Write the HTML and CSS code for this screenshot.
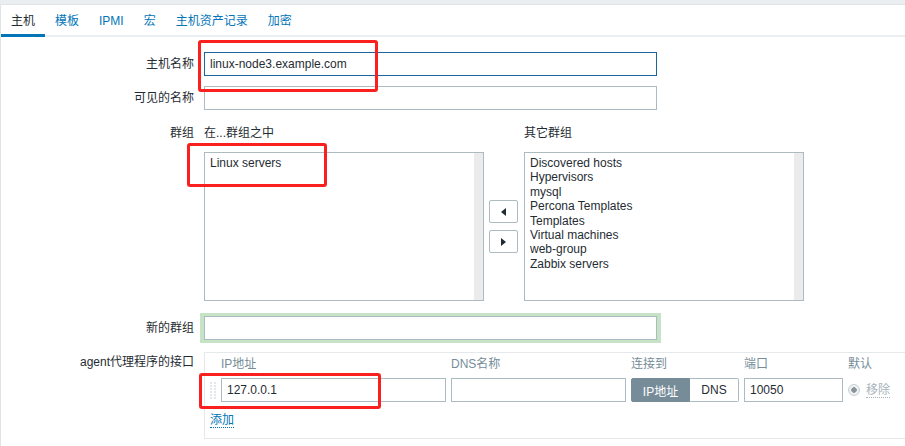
FILE: index.html
```html
<!DOCTYPE html>
<html lang="zh-CN">
<head>
    <meta charset="UTF-8">
    <meta name="viewport" content="width=device-width, initial-scale=1.0">
    <title>主机</title>
    <link rel="stylesheet" href="styles.css">
</head>
<body>
    <div class="topbar"></div>

    <div class="panel">
        <ul class="tabs">
            <li class="tab active">主机</li>
            <li class="tab">模板</li>
            <li class="tab">IPMI</li>
            <li class="tab">宏</li>
            <li class="tab">主机资产记录</li>
            <li class="tab">加密</li>
        </ul>

        <div class="form">
            <div class="form-row row-host">
                <label class="form-label">主机名称</label>
                <div class="form-field">
                    <input class="text-input wide focused" type="text" value="linux-node3.example.com">
                </div>
            </div>

            <div class="form-row row-visible">
                <label class="form-label">可见的名称</label>
                <div class="form-field">
                    <input class="text-input wide" type="text" value="">
                </div>
            </div>

            <div class="form-row row-groups">
                <label class="form-label top">群组</label>
                <div class="form-field">
                    <div class="twinbox">
                        <div class="twinbox-title">在...群组之中</div>
                        <div></div>
                        <div class="twinbox-title">其它群组</div>

                        <div class="listbox">
                            <div class="list-item">Linux servers</div>
                        </div>
                        <div class="move-buttons">
                            <button class="move-btn" type="button"><span class="arrow-left"></span></button>
                            <button class="move-btn" type="button"><span class="arrow-right"></span></button>
                        </div>
                        <div class="listbox">
                            <div class="list-item">Discovered hosts</div>
                            <div class="list-item">Hypervisors</div>
                            <div class="list-item">mysql</div>
                            <div class="list-item">Percona Templates</div>
                            <div class="list-item">Templates</div>
                            <div class="list-item">Virtual machines</div>
                            <div class="list-item">web-group</div>
                            <div class="list-item">Zabbix servers</div>
                        </div>
                    </div>
                </div>
            </div>

            <div class="form-row row-newgroup">
                <label class="form-label">新的群组</label>
                <div class="form-field">
                    <input class="text-input wide highlighted" type="text" value="">
                </div>
            </div>

            <div class="form-row row-agent">
                <label class="form-label top agent-label">agent代理程序的接口</label>
                <div class="form-field">
                    <div class="interfaces">
                        <div class="iface-grid">
                            <div></div>
                            <div class="iface-head">IP地址</div>
                            <div class="iface-head">DNS名称</div>
                            <div class="iface-head">连接到</div>
                            <div class="iface-head">端口</div>
                            <div class="iface-head">默认</div>

                            <div class="drag-handle"></div>
                            <input class="text-input" type="text" value="127.0.0.1">
                            <input class="text-input" type="text" value="">
                            <div class="toggle">
                                <span class="toggle-opt selected">IP地址</span>
                                <span class="toggle-opt">DNS</span>
                            </div>
                            <input class="text-input" type="text" value="10050">
                            <div class="default-cell">
                                <span class="radio"></span>
                                <span class="link-disabled">移除</span>
                            </div>
                        </div>
                        <div class="add-row">
                            <span class="link">添加</span>
                        </div>
                    </div>
                </div>
            </div>
        </div>
    </div>

    <!-- пометки поверх скриншота -->
    <div class="mark mark-host"></div>
    <div class="mark mark-group"></div>
    <div class="mark mark-ip"></div>
</body>
</html>
```

FILE: styles.css
```css
html, body {
    margin: 0;
    padding: 0;
    background-color: #fff;
    overflow: hidden;
}

body {
    position: relative;
    font-family: "Liberation Sans", Arial, "Noto Sans CJK SC", sans-serif;
    font-size: 12px;
    color: #1f2c33;
    min-height: 446px;
}

.topbar {
    height: 4px;
    background-color: #ebeef0;
    border-bottom: 1px solid #dfe4e7;
}

.panel {
    border-left: 1px solid #dfe4e7;
    min-height: 441px;
}

.tabs {
    display: flex;
    margin: 0;
    padding: 0;
    list-style: none;
    border-bottom: 2px solid #ebeef0;
}

.tab {
    padding: 9px 10px 6px;
    line-height: 14px;
    color: #0275b8;
    border-bottom: 3px solid transparent;
    margin-bottom: -2px;
}

.tab.active {
    color: #1f2c33;
    border-bottom-color: #0275b8;
}

.form-row {
    display: grid;
    grid-template-columns: 193px 1fr;
    column-gap: 10px;
}

.form-label {
    text-align: right;
    line-height: 24px;
}

.form-label.top {
    line-height: 14px;
}

.agent-label {
    padding-top: 3px;
}

.row-host { margin-top: 15px; }
.row-visible { margin-top: 10px; }
.row-groups { margin-top: 16px; }
.row-newgroup { margin-top: 15px; }
.row-agent { margin-top: 12px; }

.text-input {
    box-sizing: border-box;
    height: 24px;
    width: 100%;
    margin: 0;
    padding: 0 5px;
    border: 1px solid #acbbc2;
    border-radius: 0;
    background-color: #fff;
    font-family: inherit;
    font-size: 12px;
    color: #1f2c33;
    outline: none;
}

.text-input.wide {
    width: 453px;
    display: block;
}

.text-input.focused {
    border-color: #1b659c;
}

.text-input.highlighted {
    box-shadow: 0 0 0 3px #c6e3c6, -1px 0 0 3px #c6e3c6, 1px 0 0 3px #c6e3c6;
}

.twinbox {
    display: grid;
    grid-template-columns: 280px 30px 280px;
    column-gap: 5px;
    row-gap: 12px;
}

.twinbox-title {
    line-height: 14px;
}

.listbox {
    box-sizing: border-box;
    height: 149px;
    border: 1px solid #acbbc2;
    padding: 3px 5px;
    box-shadow: inset -9px 0 0 #ebebeb;
}

.list-item {
    line-height: 14.4px;
    white-space: nowrap;
}

.move-buttons {
    display: flex;
    flex-direction: column;
    justify-content: center;
    gap: 7px;
}

.move-btn {
    box-sizing: border-box;
    width: 29px;
    height: 23px;
    padding: 0;
    border: 1px solid #acbbc2;
    border-radius: 2px;
    background-color: #fff;
    display: flex;
    align-items: center;
    justify-content: center;
}

.arrow-left,
.arrow-right {
    width: 0;
    height: 0;
    border-top: 4px solid transparent;
    border-bottom: 4px solid transparent;
}

.arrow-left {
    border-right: 5px solid #1f2c33;
}

.arrow-right {
    border-left: 5px solid #1f2c33;
}

.interfaces {
    box-sizing: border-box;
    border: 1px solid #e6e9eb;
    border-right: none;
    padding: 4px 0 10px 5px;
}

.iface-grid {
    display: grid;
    grid-template-columns: 6px 225px 175px 108px 99px auto;
    column-gap: 5px;
    row-gap: 7px;
    align-items: center;
}

.iface-head {
    line-height: 14px;
    color: #768d99;
}

.drag-handle {
    width: 6px;
    height: 18px;
    background-image:
        linear-gradient(#fff 1px, transparent 1px),
        linear-gradient(90deg, #e4e8ea 2px, #fff 2px);
    background-size: 4px 3px;
}

.toggle {
    display: flex;
    height: 24px;
}

.toggle-opt {
    box-sizing: border-box;
    display: flex;
    align-items: center;
    justify-content: center;
    height: 24px;
    border: 1px solid #acbbc2;
    font-size: 12px;
}

.toggle-opt:first-child {
    width: 59px;
    border-radius: 2px 0 0 2px;
}

.toggle-opt:last-child {
    width: 49px;
    border-left: none;
    border-radius: 0 2px 2px 0;
}

.toggle-opt.selected {
    background-color: #768d99;
    border-color: #768d99;
    color: #fff;
}

.default-cell {
    display: flex;
    align-items: center;
    gap: 6px;
}

.radio {
    box-sizing: border-box;
    width: 12px;
    height: 12px;
    border-radius: 50%;
    border: 1px solid #c9d0d4;
    background: radial-gradient(circle, #8a969c 0, #8a969c 2.5px, #eef0f1 3px);
}

.link-disabled {
    color: #a6b3ba;
    line-height: 14px;
    border-bottom: 1px dotted #a6b3ba;
}

.add-row {
    margin-top: 11px;
}

.link {
    display: inline-block;
    line-height: 14px;
    color: #0275b8;
    border-bottom: 1px dotted #0275b8;
}

/* красные рамки-пометки */
.mark {
    position: absolute;
    box-sizing: border-box;
    border: 3px solid #fa2020;
    border-radius: 3px;
}

.mark-host {
    left: 198px;
    top: 40px;
    width: 180px;
    height: 52px;
}

.mark-group {
    left: 187px;
    top: 143px;
    width: 140px;
    height: 44px;
}

.mark-ip {
    left: 199px;
    top: 373px;
    width: 182px;
    height: 36px;
}
```
